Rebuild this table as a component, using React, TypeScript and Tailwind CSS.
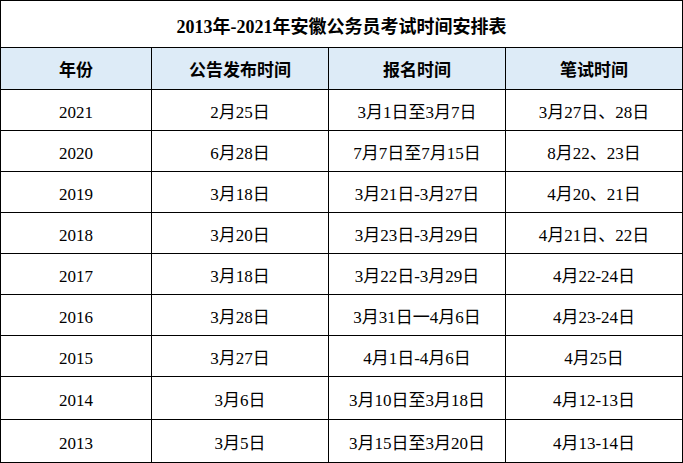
const ROWS = [
  { year: '2021', notice: '2月25日', signup: '3月1日至3月7日', exam: '3月27日、28日', h: 'h-[41px]' },
  { year: '2020', notice: '6月28日', signup: '7月7日至7月15日', exam: '8月22、23日', h: 'h-[41px]' },
  { year: '2019', notice: '3月18日', signup: '3月21日-3月27日', exam: '4月20、21日', h: 'h-[41px]' },
  { year: '2018', notice: '3月20日', signup: '3月23日-3月29日', exam: '4月21日、22日', h: 'h-[41px]' },
  { year: '2017', notice: '3月18日', signup: '3月22日-3月29日', exam: '4月22-24日', h: 'h-[41px]' },
  { year: '2016', notice: '3月28日', signup: '3月31日一4月6日', exam: '4月23-24日', h: 'h-[41px]' },
  { year: '2015', notice: '3月27日', signup: '4月1日-4月6日', exam: '4月25日', h: 'h-[41px]' },
  { year: '2014', notice: '3月6日', signup: '3月10日至3月18日', exam: '4月12-13日', h: 'h-[43px]' },
  { year: '2013', notice: '3月5日', signup: '3月15日至3月20日', exam: '4月13-14日', h: 'h-[42px]' },
];

const HEADERS = ['年份', '公告发布时间', '报名时间', '笔试时间'];

export default function App() {
  return (
    <div className="w-[683px] h-[463px] bg-white border border-black text-black">
      <div className="grid grid-cols-[151px_177px_177px_176px]">
        <div className="col-span-4 h-[47px] pt-[6px] border-b border-black flex items-center justify-center font-bold text-[18px] font-['Liberation_Serif','Noto_Sans_CJK_SC',serif]">
          2013年-2021年安徽公务员考试时间安排表
        </div>
        {HEADERS.map((h, i) => (
          <div
            key={h}
            className={`h-[42px] bg-[#ddebf7] border-b border-black flex items-center justify-center font-bold text-[17px] font-['Noto_Sans_CJK_SC',sans-serif] ${i < 3 ? 'border-r' : ''}`}
          >
            {h}
          </div>
        ))}
        {ROWS.map((r, idx) => {
          const last = idx === ROWS.length - 1;
          const cells = [r.year, r.notice, r.signup, r.exam];
          return cells.map((c, i) => (
            <div
              key={r.year + i}
              className={`${r.h} pt-[5px] flex items-center justify-center text-[17px] font-['Liberation_Serif','Noto_Sans_CJK_SC',serif] border-black ${last ? 'h-[41px]' : 'border-b'} ${i < 3 ? 'border-r' : ''}`}
            >
              {c}
            </div>
          ));
        })}
      </div>
    </div>
  );
}
